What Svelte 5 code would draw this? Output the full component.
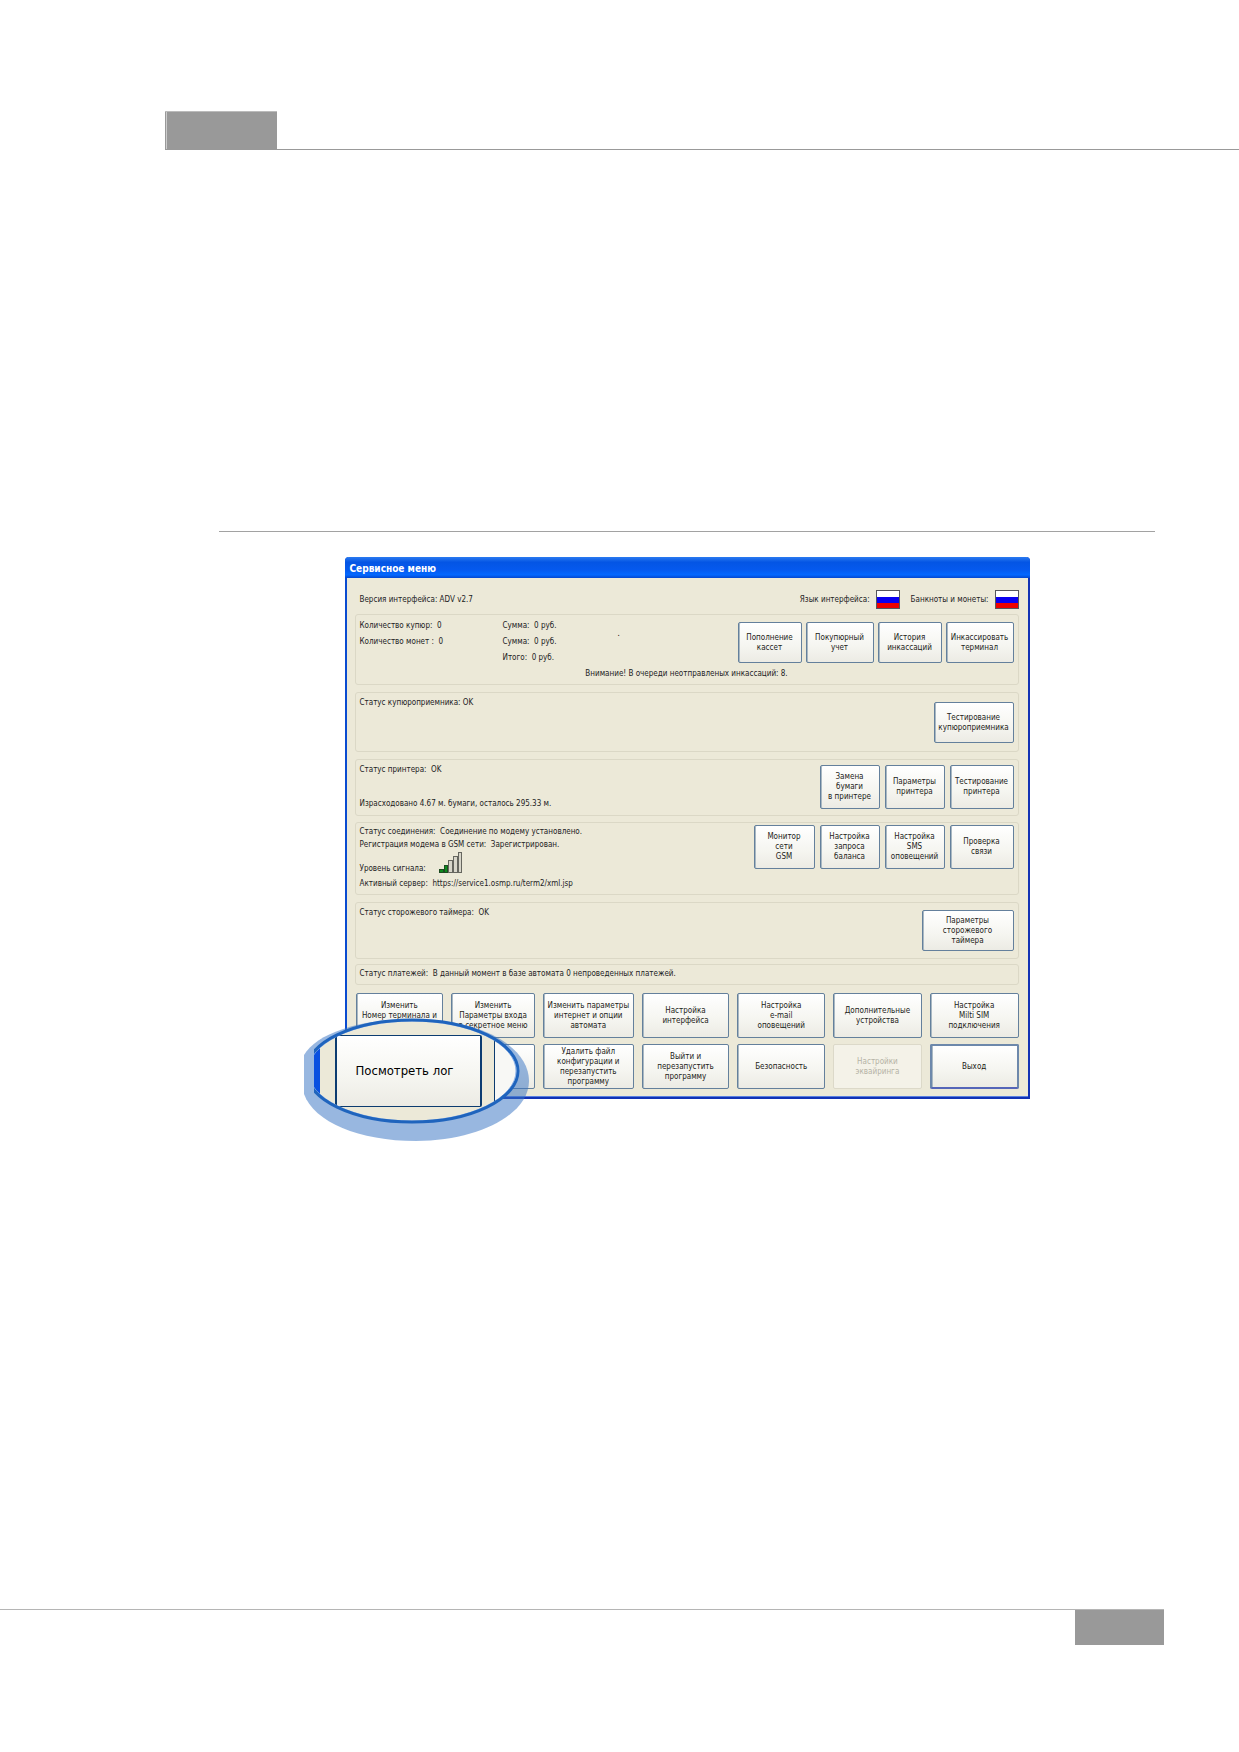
<script>
  // width is in pixels, label keeps its own line breaks
  const cashButtons = [
    { label: "Пополнение\nкассет", width: 64 },
    { label: "Покупюрный\nучет", width: 68 },
    { label: "История\nинкассаций", width: 64 },
    { label: "Инкассировать\nтерминал", width: 68 },
  ];

  const printerButtons = [
    { label: "Замена\nбумаги\nв принтере", width: 60 },
    { label: "Параметры\nпринтера", width: 60 },
    { label: "Тестирование\nпринтера", width: 64 },
  ];

  const linkButtons = [
    { label: "Монитор\nсети\nGSM", width: 61 },
    { label: "Настройка\nзапроса\nбаланса", width: 60 },
    { label: "Настройка\nSMS\nоповещений", width: 60 },
    { label: "Проверка\nсвязи", width: 64 },
  ];

  // the two empty ones are under the magnifier
  const menuButtons = [
    { label: "Изменить\nНомер терминала и\n\u00a0" },
    { label: "Изменить\nПараметры входа\nв секретное меню" },
    { label: "Изменить параметры\nинтернет и опции\nавтомата" },
    { label: "Настройка\nинтерфейса" },
    { label: "Настройка\ne-mail\nоповещений" },
    { label: "Дополнительные\nустройства" },
    { label: "Настройка\nMilti SIM\nподключения" },
    { label: "" },
    { label: "" },
    { label: "Удалить файл\nконфигурации и\nперезапустить\nпрограмму" },
    { label: "Выйти и\nперезапустить\nпрограмму" },
    { label: "Безопасность" },
    { label: "Настройки\nэквайринга", disabled: true },
    { label: "Выход", main: true },
  ];
</script>

{#snippet flag()}
  <svg class="flag" viewBox="0 0 24 19" aria-hidden="true">
    <rect width="24" height="19" fill="#55565c" />
    <rect x="1" y="1" width="22" height="6" fill="#fff" />
    <rect x="1" y="7" width="22" height="6" fill="#0a00f0" />
    <rect x="1" y="13" width="22" height="5" fill="#ee0000" />
  </svg>
{/snippet}

{#snippet buttonRow(buttons)}
  <div class="buttons">
    {#each buttons as b}
      <button style="width: {b.width}px">{b.label}</button>
    {/each}
  </div>
{/snippet}

<div class="page">
  <header><div class="tab"></div></header>

  <main>
    <div class="window">
      <h1>Сервисное меню</h1>

      <div class="body">
        <div class="top">
          <span>Версия интерфейса: ADV v2.7</span>
          <span class="lang">Язык интерфейса: {@render flag()}</span>
          <span class="lang">Банкноты и монеты: {@render flag()}</span>
        </div>

        <section class="panel cash">
          <div class="split">
            <div class="sums">
              <span>Количество купюр: &nbsp;0</span><span>Сумма: &nbsp;0 руб.</span><span></span>
              <span>Количество монет : &nbsp;0</span><span>Сумма: &nbsp;0 руб.</span><span class="dot">.</span>
              <span></span><span>Итого: &nbsp;0 руб.</span><span></span>
            </div>
            {@render buttonRow(cashButtons)}
          </div>
          <p class="warning">Внимание! В очереди неотправленых инкассаций: 8.</p>
        </section>

        <section class="panel acceptor">
          <p>Статус купюроприемника: OK</p>
          {@render buttonRow([{ label: "Тестирование\nкупюроприемника", width: 80 }])}
        </section>

        <section class="panel printer">
          <div class="paper">
            <p>Статус принтера: &nbsp;OK</p>
            <p>Израсходовано 4.67 м. бумаги, осталось 295.33 м.</p>
          </div>
          {@render buttonRow(printerButtons)}
        </section>

        <section class="panel link">
          <div class="lines">
            <p>Статус соединения: &nbsp;Соединение по модему установлено.</p>
            <p>Регистрация модема в GSM сети: &nbsp;Зарегистрирован.</p>
            <div class="signal">
              <span>Уровень сигнала:</span>
              <svg viewBox="0 0 24 21" aria-hidden="true">
                <g fill="#0c8a1c" stroke="#1d4a22">
                  <rect x="0.5" y="17.5" width="4" height="3" />
                  <rect x="5.5" y="13.5" width="3" height="7" />
                </g>
                <g fill="#d8d6ca" stroke="#66665f">
                  <rect x="9.5" y="8.5" width="4" height="12" />
                  <rect x="14.5" y="4.5" width="4" height="16" />
                  <rect x="19.5" y="0.5" width="3" height="20" />
                </g>
              </svg>
            </div>
            <p>Активный сервер: &nbsp;https://service1.osmp.ru/term2/xml.jsp</p>
          </div>
          {@render buttonRow(linkButtons)}
        </section>

        <section class="panel timer">
          <p>Статус сторожевого таймера: &nbsp;OK</p>
          {@render buttonRow([{ label: "Параметры\nсторожевого\nтаймера", width: 92 }])}
        </section>

        <section class="panel payments">
          <p>Статус платежей: &nbsp;В данный момент в базе автомата 0 непроведенных платежей.</p>
        </section>

        <nav class="menu">
          {#each menuButtons as b}
            <button disabled={b.disabled} class:main={b.main}>{b.label}</button>
          {/each}
        </nav>
      </div>

      <!-- magnifier over the log button -->
      <div class="lens">
        <svg class="shade" viewBox="0 0 226 124" aria-hidden="true">
          <path
            d="M0 37C12 16 54 1 110 1C176 1 225 28 225 63C225 96 175 123 112 123C55 123 10 104 0 76Z"
            fill="#3a74c4"
            fill-opacity="0.52"
          />
        </svg>
        <div class="glass">
          <div class="edge"></div>
          <button class="log">Посмотреть лог</button>
          <div class="next"></div>
        </div>
        <svg class="rim" viewBox="0 0 206 106" aria-hidden="true">
          <ellipse cx="98" cy="53" rx="104" ry="50" fill="none" stroke="#8fb4ea" stroke-width="1" />
          <ellipse cx="98" cy="53" rx="106" ry="51" fill="none" stroke="#1f64bd" stroke-width="3" />
        </svg>
      </div>
    </div>
  </main>

  <footer><div class="tab"></div></footer>
</div>

<style>
  :global(body) {
    margin: 0;
    background: #fff;
  }
  .page {
    display: flex;
    flex-direction: column;
    min-height: 100vh;
    box-sizing: border-box;
    padding: 111px 0 107px;
    font: 8px/16px "DejaVu Sans Condensed", "DejaVu Sans", sans-serif;
    color: #22221e;
  }
  header {
    margin-left: 165px;
    border-bottom: 1px solid #999;
  }
  header .tab {
    width: 112px;
    height: 38px;
    box-sizing: border-box;
    background: #999;
    border-top: 1px solid #bbb;
    box-shadow: inset 1px 0 #999, inset 2px 0 #ccc;
  }
  main {
    flex: 1;
    margin: 381px 84px 0 219px;
    border-top: 1px solid #a2a2a2;
    padding-top: 25px;
  }
  footer {
    display: flex;
    justify-content: flex-end;
    margin-right: 75px;
    border-top: 1px solid #b5b5b5;
  }
  footer .tab {
    width: 89px;
    height: 35px;
    background: #999;
  }
  p {
    margin: 0;
  }

  .window {
    position: relative;
    max-width: 685px;
    margin: 0 auto;
    box-sizing: border-box;
    background: #ece9d8;
    border: 2px solid #0a4bd0;
    border-top: 0;
    border-right: 2px solid #1232b4;
    border-bottom: 2px solid #1232b4;
    border-radius: 4px 4px 0 0;
  }
  h1 {
    margin: 0 -2px;
    padding-left: 5px;
    height: 21px;
    font-size: 10px;
    line-height: 23px;
    color: #fff;
    border-radius: 4px 4px 0 0;
    background: linear-gradient(#2a7af0, #0455e4 25%, #0559ee 60%, #0368ff 85%, #0347d0);
  }
  .body {
    padding: 8px 9px 7px 8px;
    border-bottom: 1px solid #5a80e0;
  }

  .top {
    display: flex;
    align-items: center;
    height: 27px;
    padding-left: 5px;
  }
  .lang {
    display: flex;
    align-items: center;
    gap: 6px;
  }
  .lang:nth-child(2) {
    margin: 0 11px 0 auto;
  }
  .flag {
    width: 24px;
    height: 19px;
  }

  .panel {
    box-sizing: border-box;
    display: flex;
    justify-content: space-between;
    margin-bottom: 7px;
    padding: 2px 4px 0 4px;
    border: 1px solid #dbd8c6;
    border-radius: 3px;
  }
  .buttons {
    display: flex;
    gap: 4px;
  }
  button {
    box-sizing: border-box;
    padding: 0;
    flex-shrink: 0;
    font: inherit;
    line-height: 10px;
    color: #1c1c18;
    white-space: pre;
    background: linear-gradient(#fff, #f5f5f0 60%, #ecebe4);
    border: 1px solid #64809c;
    border-radius: 2px;
    box-shadow: inset 1px 0 #a9b8c2;
    overflow: hidden;
  }
  .buttons button {
    height: 41px;
  }

  .cash {
    display: block;
    margin-top: 1px;
    min-height: 71px;
    padding-top: 3px;
  }
  .split {
    display: flex;
    justify-content: space-between;
  }
  .sums {
    display: grid;
    grid-template-columns: 143px 115px auto;
    grid-auto-rows: 16px;
  }
  .dot {
    line-height: 0;
    color: #000;
  }
  .cash .buttons {
    padding-top: 4px;
  }
  .warning {
    text-align: center;
  }
  .acceptor {
    min-height: 60px;
  }
  .acceptor .buttons {
    padding-top: 7px;
  }
  .printer {
    min-height: 57px;
    margin-bottom: 6px;
  }
  .printer .buttons,
  .link .buttons {
    gap: 5px;
  }
  .paper {
    display: flex;
    flex-direction: column;
    justify-content: space-between;
    padding-bottom: 3px;
  }
  .printer .buttons {
    padding-top: 3px;
  }
  .printer button,
  .link button {
    height: 44px;
  }
  .link {
    min-height: 73px;
  }
  .lines {
    line-height: 13px;
  }
  .signal {
    display: flex;
    gap: 4px;
    height: 26px;
  }
  .signal span {
    width: 75px;
    line-height: 36px;
  }
  .signal svg {
    width: 24px;
    height: 21px;
    margin-top: 1px;
  }
  .timer {
    min-height: 57px;
    margin-bottom: 5px;
  }
  .timer .buttons {
    padding-top: 5px;
  }
  .payments {
    min-height: 21px;
    padding-top: 1px;
  }

  .menu {
    display: grid;
    grid-template-columns: 88fr 84fr 91fr 88fr 88fr 89fr 89fr;
    grid-auto-rows: 45px;
    gap: 6px 8px;
    padding-left: 1px;
    padding-top: 1px;
  }
  .menu button {
    min-width: 0;
  }
  .menu button.main {
    border: 2px solid #6d88ab;
    border-bottom-color: #5565b8;
  }
  .menu button:disabled {
    color: #b5b3a6;
    background: #f4f2e8;
    border-color: #dcd9c9;
    box-shadow: none;
  }

  .lens {
    position: absolute;
    left: -43px;
    bottom: -45px;
    width: 226px;
    height: 124px;
  }
  .shade {
    position: absolute;
    inset: 0;
  }
  .glass {
    position: absolute;
    left: 10px;
    top: 0;
    width: 206px;
    height: 105px;
    display: flex;
    align-items: center;
    clip-path: ellipse(106px 51px at 98px 53px);
    background: #ece9d8;
  }
  .edge {
    width: 6px;
    height: 105px;
    margin-right: 15px;
    flex-shrink: 0;
    background: #0a50e0;
  }
  .log {
    width: 147px;
    height: 72px;
    font-size: 13px;
    line-height: 16px;
    padding-right: 7px;
    color: #000;
    border: 2px solid #0c3c70;
    border-top-width: 1px;
    border-bottom-width: 1px;
    box-shadow: none;
  }
  .next {
    width: 40px;
    height: 72px;
    margin-left: 12px;
    flex-shrink: 0;
    background: #f8f8f5;
    border-left: 1px solid #0c3c70;
  }
  .rim {
    position: absolute;
    left: 10px;
    top: 0;
    width: 206px;
    height: 106px;
  }
</style>
